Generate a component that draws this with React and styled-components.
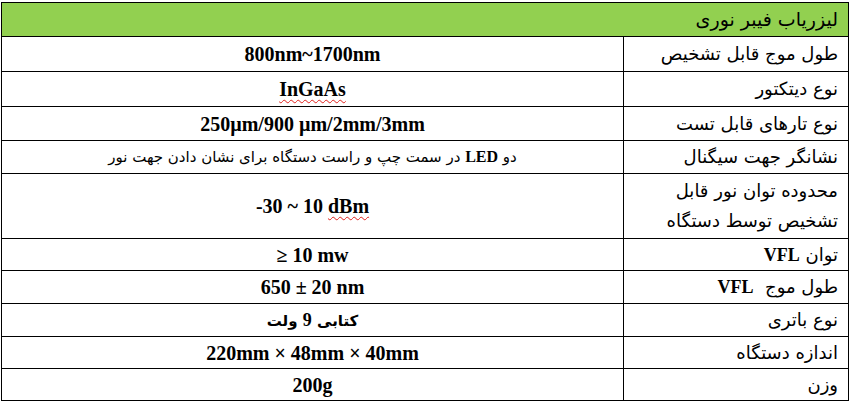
import React from "react";
import styled, { createGlobalStyle } from "styled-components";

// ================= STYLES =================

const GlobalStyle = createGlobalStyle`
  html, body {
    margin: 0;
    padding: 0;
    background: #ffffff;
  }
`;

const PageWrapper = styled.div`
  padding: 2px 2px 0 1px;
`;

const Table = styled.table`
  width: 847px;
  border-collapse: collapse;
  direction: rtl;
  table-layout: fixed;
`;

const HeaderCell = styled.th`
  height: 33px;
  padding: 0 10px;
  background: #92d050;
  border: 1px solid #000;
  text-align: right;
  font-family: "DejaVu Sans", sans-serif;
  font-size: 19px;
  font-weight: normal;
  line-height: 1;
  color: #000;
`;

const Label = styled.td`
  height: ${(p) => p.h}px;
  padding: 0 10px 0 0;
  border: 1px solid #000;
  text-align: right;
  font-family: "DejaVu Sans", sans-serif;
  font-size: 18px;
  font-weight: normal;
  line-height: ${(p) => (p.multi ? "30px" : "1")};
  color: #000;
`;

const Value = styled.td`
  height: ${(p) => p.h}px;
  padding: 0;
  border: 1px solid #000;
  text-align: center;
  font-family: ${(p) =>
    p.fa ? `"DejaVu Sans", sans-serif` : `"Liberation Serif", serif`};
  font-size: ${(p) => (p.fa ? "15px" : "20px")};
  font-weight: ${(p) => (p.light ? "normal" : "bold")};
  line-height: 1;
  white-space: nowrap;
  color: #000;
`;

const Latin = styled.b`
  font-family: "Liberation Serif", serif;
  font-size: ${(p) => p.size || 20}px;
`;

const Typo = styled.span`
  text-decoration: underline wavy #e0201b;
  text-decoration-thickness: 1px;
  text-underline-offset: 3px;
`;

// ================= DATA =================

const rows = [
  { label: "طول موج قابل تشخیص", value: "800nm~1700nm", h: 34 },
  { label: "نوع دیتکتور", value: <Typo>InGaAs</Typo>, h: 34 },
  { label: "نوع تارهای قابل تست", value: "250µm/900 µm/2mm/3mm", h: 33 },
  {
    label: "نشانگر جهت سیگنال",
    value: (
      <>
        دو <Latin size={16}>LED</Latin> در سمت چپ و راست دستگاه برای نشان دادن جهت نور
      </>
    ),
    fa: true,
    light: true,
    h: 32,
  },
  {
    label: (
      <>
        محدوده توان نور قابل
        <br />
        تشخیص توسط دستگاه
      </>
    ),
    multi: true,
    value: (
      <span dir="ltr">
        -30 ~ 10 <Typo>dBm</Typo>
      </span>
    ),
    h: 64,
  },
  {
    label: (
      <>
        توان <Latin size={18}>VFL</Latin>
      </>
    ),
    value: <span dir="ltr">≥ 10 mw</span>,
    h: 31,
  },
  {
    label: (
      <>
        طول موج &nbsp;<Latin size={18}>VFL</Latin>
      </>
    ),
    value: <span dir="ltr">650 ± 20 nm</span>,
    h: 32,
  },
  {
    label: "نوع باتری",
    value: (
      <>
        کتابی <Latin size={18}>9</Latin> ولت
      </>
    ),
    fa: true,
    h: 32,
  },
  { label: "اندازه دستگاه", value: <span dir="ltr">220mm × 48mm × 40mm</span>, h: 31 },
  { label: "وزن", value: "200g", h: 31 },
];

// ================= COMPONENT =================

function App() {
  return (
    <PageWrapper>
      <GlobalStyle />
      <Table>
        <colgroup>
          <col style={{ width: 225 }} />
          <col style={{ width: 622 }} />
        </colgroup>
        <thead>
          <tr>
            <HeaderCell colSpan="2">لیزریاب فیبر نوری</HeaderCell>
          </tr>
        </thead>
        <tbody>
          {rows.map((row, index) => (
            <tr key={index}>
              <Label h={row.h} multi={row.multi}>
                {row.label}
              </Label>
              <Value h={row.h} fa={row.fa} light={row.light}>
                {row.value}
              </Value>
            </tr>
          ))}
        </tbody>
      </Table>
    </PageWrapper>
  );
}

export default App;
